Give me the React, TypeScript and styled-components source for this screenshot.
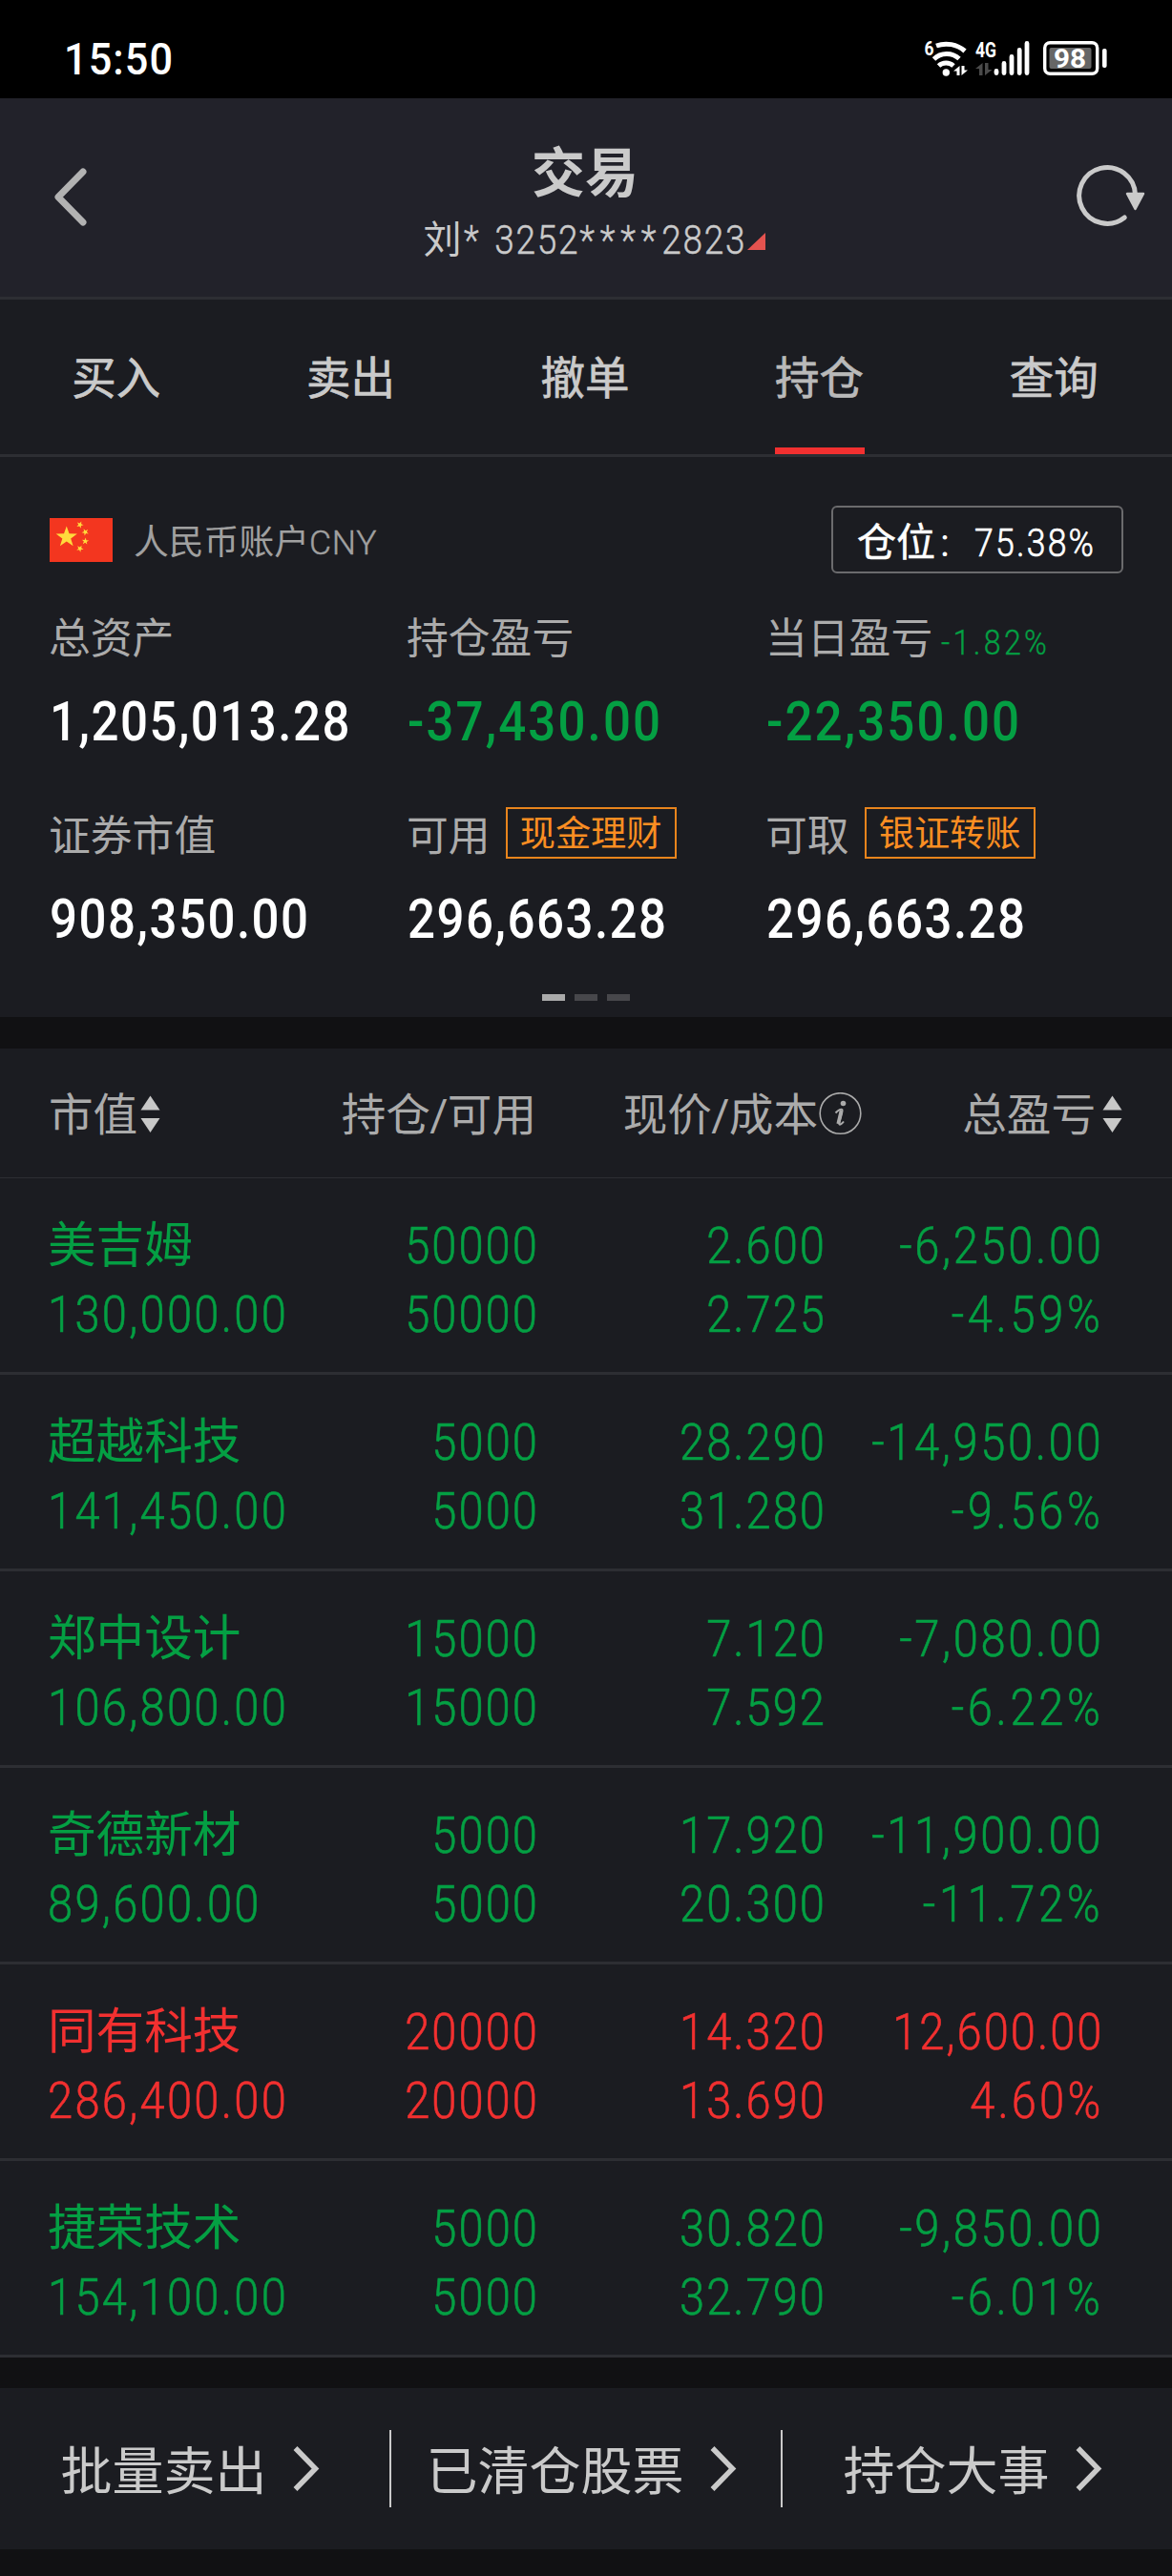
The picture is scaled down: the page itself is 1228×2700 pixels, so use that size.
import React from 'react';
import styled, { createGlobalStyle } from 'styled-components';

const GREEN = '#049f43';
const RED = '#f23030';
const LIGHT = '#cacaca';
const MUTED = '#ababab';
const PANEL = '#1b1c21';
const LINE = '#2d2e33';

const Global = createGlobalStyle`
  html, body { margin: 0; padding: 0; background: #111113; }
  * { box-sizing: border-box; }
`;

const Screen = styled.main`
  width: 1228px;
  height: 2700px;
  display: flex;
  flex-direction: column;
  overflow: hidden;
  background: #111113;
  color: ${LIGHT};
  font-family: Roboto, 'Noto Sans CJK SC', sans-serif;
  white-space: nowrap;
`;

/* Status bar */
const StatusBar = styled.div`
  height: 103px;
  flex: none;
  display: flex;
  align-items: flex-start;
  justify-content: space-between;
  padding: 40px 65px 0 67px;
  background: #000;
  color: #fff;
  line-height: 44px;
`;

/* Header */
const Header = styled.header`
  height: 211px;
  flex: none;
  display: grid;
  grid-template-columns: 200px 1fr 200px;
  background: #22222a;
  border-bottom: 3px solid ${LINE};
`;
const BackIcon = styled.svg`
  margin: 72px 0 0 52px;
`;
const RefreshIcon = styled.svg`
  margin: 66px 0 0 94px;
`;
const Heading = styled.div`
  display: flex;
  flex-direction: column;
  align-items: center;
  padding-top: 43px;
`;
const Title = styled.h1`
  margin: 0 2px 0 0;
  font-size: 56px;
  line-height: 72px;
  font-weight: 700;
`;
const Account = styled.div`
  display: flex;
  align-items: center;
  height: 56px;
  margin: 6px 0 0 17px;
  font-size: 40px;
  line-height: 56px;
`;
const AccountNumber = styled.span`
  width: 297px;
  margin-left: 2px;
`;
const Corner = styled.svg`
  margin-top: 2px;
`;

/* Numerals are narrowed to a DIN-like proportion */
const Num = styled.span<{ $size: number; $w?: number; $ls?: number; $right?: boolean; $sx?: number; $ink?: number }>`
  display: inline-block;
  font-size: ${(p) => p.$size}px;
  font-weight: ${(p) => p.$w ?? 400};
  letter-spacing: ${(p) => p.$ls ?? 2.3}px;
  -webkit-text-stroke: ${(p) => p.$ink ?? 0}px currentColor;
  transform: scaleX(${(p) => p.$sx ?? 0.88});
  transform-origin: ${(p) => (p.$right ? 'right' : 'left')} center;
`;
const Stars = styled.span`
  letter-spacing: 6.6px;
`;

/* Tabs */
const Tabs = styled.nav`
  height: 165px;
  flex: none;
  display: grid;
  grid-template-columns: repeat(5, 1fr);
  justify-items: center;
  background: ${PANEL};
  border-bottom: 3px solid ${LINE};
`;
const Tab = styled.div<{ $active?: boolean }>`
  width: 94px;
  height: 162px;
  margin-right: 1px;
  font-size: 46.5px;
  line-height: 166px;
  -webkit-text-stroke: 0.7px currentColor;
  color: ${(p) => (p.$active ? '#b9b9b9' : LIGHT)};
  box-shadow: ${(p) => (p.$active ? `inset 0 -7px 0 ${RED}` : 'none')};
`;

/* Summary */
const Summary = styled.section`
  height: 587px;
  flex: none;
  padding: 51px 51px 0 52px;
  background: ${PANEL};
`;
const SummaryHead = styled.div`
  height: 71px;
  display: flex;
  align-items: center;
`;
const Currency = styled.div`
  margin-left: 22px;
  padding-top: 6px;
  font-size: 36.8px;
  line-height: 60px;
  color: #a0a0a0;
  flex: 1;
`;
const Latin = styled.span`
  font-size: 35.5px;
  font-weight: 300;
  letter-spacing: 0.8px;
  -webkit-text-stroke: 0.4px currentColor;
`;
const Ratio = styled.div`
  width: 306px;
  height: 71px;
  display: flex;
  align-items: center;
  padding: 6px 0 0 25px;
  border: 2px solid #6b6b6d;
  border-radius: 6px;
  color: #fff;
  font-size: 41px;
  line-height: 60px;
`;
const RatioLabel = styled.span`
  -webkit-text-stroke: 0.5px currentColor;
`;
const Colon = styled.span`
  width: 41px;
  padding-left: 5px;
`;
const Metrics = styled.div`
  display: grid;
  grid-template-columns: 375px 376px 1fr;
  row-gap: 35px;
  margin-top: 29px;
`;
const Metric = styled.div`
  height: 172px;
`;
const Label = styled.div`
  height: 80px;
  display: flex;
  align-items: center;
  margin-left: -1px;
  font-size: 43.8px;
  line-height: 80px;
  color: ${MUTED};
`;
const Value = styled.div<{ $color?: string }>`
  height: 92px;
  line-height: 92px;
  color: ${(p) => p.$color ?? '#fff'};
`;
const Delta = styled.span`
  margin-left: 9px;
  padding-top: 5px;
  color: ${GREEN};
`;
const Chip = styled.span`
  width: 179px;
  height: 54px;
  margin: 0 0 8px 16px;
  border: 2px solid #e8841c;
  text-align: center;
  color: #fb8e22;
  font-size: 37.2px;
  line-height: 53px;
`;
const Pager = styled.div`
  display: flex;
  justify-content: center;
  gap: 10px;
  margin: 33px 1px 0 0;
`;
const PagerDot = styled.i<{ $on?: boolean }>`
  width: 24px;
  height: 7px;
  background: ${(p) => (p.$on ? '#aaaaaa' : '#47474b')};
`;

/* Holdings */
const Holdings = styled.section`
  margin-top: 33px;
  flex: none;
  background: ${PANEL};
`;
const HeadRow = styled.div`
  height: 136px;
  display: grid;
  grid-template-columns: 300px 211px 341px 273px;
  padding: 3px 52px 0 51px;
  border-bottom: 1px solid ${LINE};
  font-size: 46.6px;
  line-height: 135px;
  color: ${MUTED};
`;
const HeadCell = styled.div<{ $end?: boolean }>`
  display: flex;
  align-items: center;
  justify-content: ${(p) => (p.$end ? 'flex-end' : 'flex-start')};
`;
const Slash = styled.span`
  width: 18px;
  display: flex;
  justify-content: center;
`;
const SortIcon = styled.svg<{ $gap: number }>`
  margin: -3px 0 0 ${(p) => p.$gap}px;
`;
const InfoIcon = styled.svg`
  margin: -4px 0 0 1px;
`;
const Row = styled.div<{ $up?: boolean }>`
  height: 206px;
  display: grid;
  grid-template-columns: 300px 211px 301px 290px;
  padding: 35px 0 0 50px;
  border-bottom: 3px solid ${LINE};
  line-height: 72px;
  color: ${(p) => (p.$up ? RED : GREEN)};
`;
const Cell = styled.div<{ $end?: boolean }>`
  display: flex;
  flex-direction: column;
  align-items: ${(p) => (p.$end ? 'flex-end' : 'flex-start')};
  margin-right: -4px;
`;
const Name = styled.span`
  font-size: 50.6px;
`;

/* Footer */
const Footer = styled.footer`
  height: 169px;
  flex: none;
  margin-top: 32px;
  display: flex;
  align-items: center;
  background: ${PANEL};
`;
const Action = styled.div`
  flex: 1;
  display: flex;
  align-items: center;
  justify-content: center;
  gap: 27px;
  padding-right: 10px;
  font-size: 54px;
  line-height: 80px;
`;
const ActionText = styled.span`
  padding-top: 8px;
`;
const Divider = styled.i`
  width: 2px;
  height: 81px;
  background: ${LIGHT};
`;

const starPath = (cx: number, cy: number, r: number, turn = 0) =>
  Array.from({ length: 10 }, (_, i) => {
    const a = (Math.PI / 5) * i - Math.PI / 2 + turn;
    const d = i % 2 ? r * 0.4 : r;
    return `${cx + d * Math.cos(a)},${cy + d * Math.sin(a)}`;
  }).join(' ');

const Flag = () => (
  <svg width="66" height="46" viewBox="0 0 65 46" preserveAspectRatio="none">
    <rect width="65" height="46" fill="#f3361f" />
    <g fill="#ffda3c">
      <polygon points={starPath(17.5, 20, 11.5)} />
      <polygon points={starPath(31.3, 7, 3.8, 0.4)} />
      <polygon points={starPath(36.8, 14.7, 3.8, 0.8)} />
      <polygon points={starPath(36.8, 24.3, 3.8, 0.1)} />
      <polygon points={starPath(31.3, 32, 3.8, 0.5)} />
    </g>
  </svg>
);

const StatusIcons = () => (
  <svg width="195" height="42" viewBox="968 40 195 42" fontFamily="Roboto, sans-serif" fontWeight="700">
    <text x="968.5" y="58" fontSize="20" fill="#fff" textLength="10" lengthAdjust="spacingAndGlyphs">6</text>
    <g fill="none" stroke="#fff" strokeWidth="5">
      <path d="M981 48 A30 30 0 0 1 1011 53.5" />
      <path d="M978.5 62 A19.5 19.5 0 0 1 1005 61.5" />
      <path d="M983.5 69 A11.5 11.5 0 0 1 999 69" />
    </g>
    <circle cx="991.3" cy="76" r="3.7" fill="#fff" />
    <g fill="#fff">
      <path d="M1005.500 69v10h-3v-4.500h-3.500z" />
      <path d="M1007.500 79v-10h3v4.500h3.500z" />
    </g>
    <text x="1022" y="60" fontSize="22.500" fill="#fff" textLength="22" lengthAdjust="spacingAndGlyphs">4G</text>
    <g fill="#4a4a4a">
      <path d="M1029.500 66v13h-3.500v-7h-4z" />
      <path d="M1032 79v-13h3.500v7h4z" />
    </g>
    <g stroke="#fff" strokeWidth="4.800" strokeLinecap="round">
      <path d="M1044 74.500V76.500M1052 66.500V76.500M1060 59.500V76.500M1068.200 52.500V76.500M1076 45.500V76.500" />
    </g>
    <rect x="1094.700" y="44.700" width="55" height="32.600" rx="5.500" fill="none" stroke="#fff" strokeWidth="3.400" />
    <rect x="1099.500" y="50" width="44" height="22" rx="2" fill="#666" />
    <rect x="1155" y="51" width="4.600" height="20" rx="2" fill="#fff" />
    <text x="1104" y="71" fontSize="28" fill="#fff" textLength="34" lengthAdjust="spacingAndGlyphs">98</text>
  </svg>
);

const Sort = ({ gap }: { gap: number }) => (
  <SortIcon $gap={gap} width="21" height="40" viewBox="0 0 21 40" fill="#c8c8c8">
    <path d="M10.500 0.500L20.500 15.500H0.500Z" />
    <path d="M10.500 39L20.500 24H0.500Z" />
  </SortIcon>
);

const Info = () => (
  <InfoIcon width="45" height="45" viewBox="0 0 45 45">
    <circle cx="22.500" cy="22" r="21.300" fill="none" stroke={MUTED} strokeWidth="1.600" />
    <circle cx="25.500" cy="11.500" r="2.800" fill={MUTED} />
    <path d="M17.500 21.500C20.500 18 23.500 17 24.500 18.200C25.500 19.500 21.500 30 21.300 32.500C21.200 35 24 33 26 30.500" fill="none" stroke={MUTED} strokeWidth="2" />
    <path d="M23.500 19L20.200 33" stroke={MUTED} strokeWidth="3.600" />
  </InfoIcon>
);

const Chevron = () => (
  <svg width="28" height="50" viewBox="0 0 28 50">
    <path d="M2.500 3L23.500 24.500L2.500 46" fill="none" stroke={LIGHT} strokeWidth="5.500" />
  </svg>
);

const tabs = ['买入', '卖出', '撤单', '持仓', '查询'];

const holdings = [
  { name: '美吉姆', value: '130,000.00', qty: '50000', price: '2.600', cost: '2.725', pl: '-6,250.00', pct: '-4.59%' },
  { name: '超越科技', value: '141,450.00', qty: '5000', price: '28.290', cost: '31.280', pl: '-14,950.00', pct: '-9.56%' },
  { name: '郑中设计', value: '106,800.00', qty: '15000', price: '7.120', cost: '7.592', pl: '-7,080.00', pct: '-6.22%' },
  { name: '奇德新材', value: '89,600.00', qty: '5000', price: '17.920', cost: '20.300', pl: '-11,900.00', pct: '-11.72%' },
  { name: '同有科技', value: '286,400.00', qty: '20000', price: '14.320', cost: '13.690', pl: '12,600.00', pct: '4.60%', up: true },
  { name: '捷荣技术', value: '154,100.00', qty: '5000', price: '30.820', cost: '32.790', pl: '-9,850.00', pct: '-6.01%' },
];

const metrics = [
  { label: '总资产', value: '1,205,013.28' },
  { label: '持仓盈亏', value: '-37,430.00', color: GREEN },
  { label: '当日盈亏', value: '-22,350.00', color: GREEN, delta: '-1.82%' },
  { label: '证券市值', value: '908,350.00' },
  { label: '可用', value: '296,663.28', chip: '现金理财' },
  { label: '可取', value: '296,663.28', chip: '银证转账' },
];

const TableNum = ({ children, ls }: { children: string; ls?: number }) => (
  <Num $size={53.5} $w={300} $ink={0.6} $right $ls={ls}>{children}</Num>
);

export default function App() {
  return (
    <Screen>
      <Global />
      <StatusBar>
        <Num $size={47} $w={500} $ls={1.2} $sx={0.92}>15:50</Num>
        <StatusIcons />
      </StatusBar>

      <Header>
        <BackIcon width="42" height="64" viewBox="0 0 42 64">
          <path d="M35 5L9 31.500L35 58" fill="none" stroke="#b2b2b2" strokeWidth="7" strokeLinecap="round" strokeLinejoin="round" />
        </BackIcon>
        <Heading>
          <Title>交易</Title>
          <Account>
            <span>刘</span>
            <AccountNumber>
              <Num $size={42} $w={300} $ink={0.5} $ls={2}>
                <Stars>*</Stars> 3252<Stars>****</Stars>2823
              </Num>
            </AccountNumber>
            <Corner width="19" height="18" viewBox="0 0 19 18">
              <path d="M0 18L19 0V18Z" fill="#e5534f" />
            </Corner>
          </Account>
        </Heading>
        <RefreshIcon width="80" height="72" viewBox="1122 169 80 72">
          <path d="M1189.500 204A29.400 29.400 0 1 0 1178.300 228" fill="none" stroke={LIGHT} strokeWidth="5" strokeLinecap="round" />
          <path d="M1181 203H1198L1189.500 219Z" fill={LIGHT} stroke={LIGHT} strokeWidth="2.500" strokeLinejoin="round" />
        </RefreshIcon>
      </Header>

      <Tabs>
        {tabs.map((t) => (
          <Tab key={t} $active={t === '持仓'}>{t}</Tab>
        ))}
      </Tabs>

      <Summary>
        <SummaryHead>
          <Flag />
          <Currency>人民币账户<Latin>CNY</Latin></Currency>
          <Ratio>
            <RatioLabel>仓位</RatioLabel><Colon>:</Colon>
            <Num $size={40.5} $w={300} $ink={0.7} $ls={2.5}>75.38%</Num>
          </Ratio>
        </SummaryHead>
        <Metrics>
          {metrics.map((m) => (
            <Metric key={m.label}>
              <Label>
                {m.label}
                {m.delta && <Delta><Num $size={36.5} $w={300} $ink={0.4} $ls={3.8}>{m.delta}</Num></Delta>}
                {m.chip && <Chip>{m.chip}</Chip>}
              </Label>
              <Value $color={m.color}>
                <Num $size={58} $w={500} $ls={m.value.startsWith('-') ? 2.4 : 1.7}>{m.value}</Num>
              </Value>
            </Metric>
          ))}
        </Metrics>
        <Pager>
          <PagerDot $on />
          <PagerDot />
          <PagerDot />
        </Pager>
      </Summary>

      <Holdings>
        <HeadRow>
          <HeadCell>市值<Sort gap={3} /></HeadCell>
          <HeadCell $end>持仓<Slash>/</Slash>可用</HeadCell>
          <HeadCell $end>现价<Slash>/</Slash>成本<Info /></HeadCell>
          <HeadCell $end>总盈亏<Sort gap={7} /></HeadCell>
        </HeadRow>
        {holdings.map((h) => (
          <Row key={h.name} $up={h.up}>
            <Cell>
              <Name>{h.name}</Name>
              <Num $size={53.5} $w={300} $ink={0.6} $ls={2.6}>{h.value}</Num>
            </Cell>
            <Cell $end>
              <TableNum>{h.qty}</TableNum>
              <TableNum>{h.qty}</TableNum>
            </Cell>
            <Cell $end>
              <TableNum>{h.price}</TableNum>
              <TableNum>{h.cost}</TableNum>
            </Cell>
            <Cell $end>
              <TableNum ls={h.up ? 2.3 : 3}>{h.pl}</TableNum>
              <TableNum ls={h.up ? 3.6 : 4.1}>{h.pct}</TableNum>
            </Cell>
          </Row>
        ))}
      </Holdings>

      <Footer>
        <Action><ActionText>批量卖出</ActionText><Chevron /></Action>
        <Divider />
        <Action><ActionText>已清仓股票</ActionText><Chevron /></Action>
        <Divider />
        <Action><ActionText>持仓大事</ActionText><Chevron /></Action>
      </Footer>
    </Screen>
  );
}
